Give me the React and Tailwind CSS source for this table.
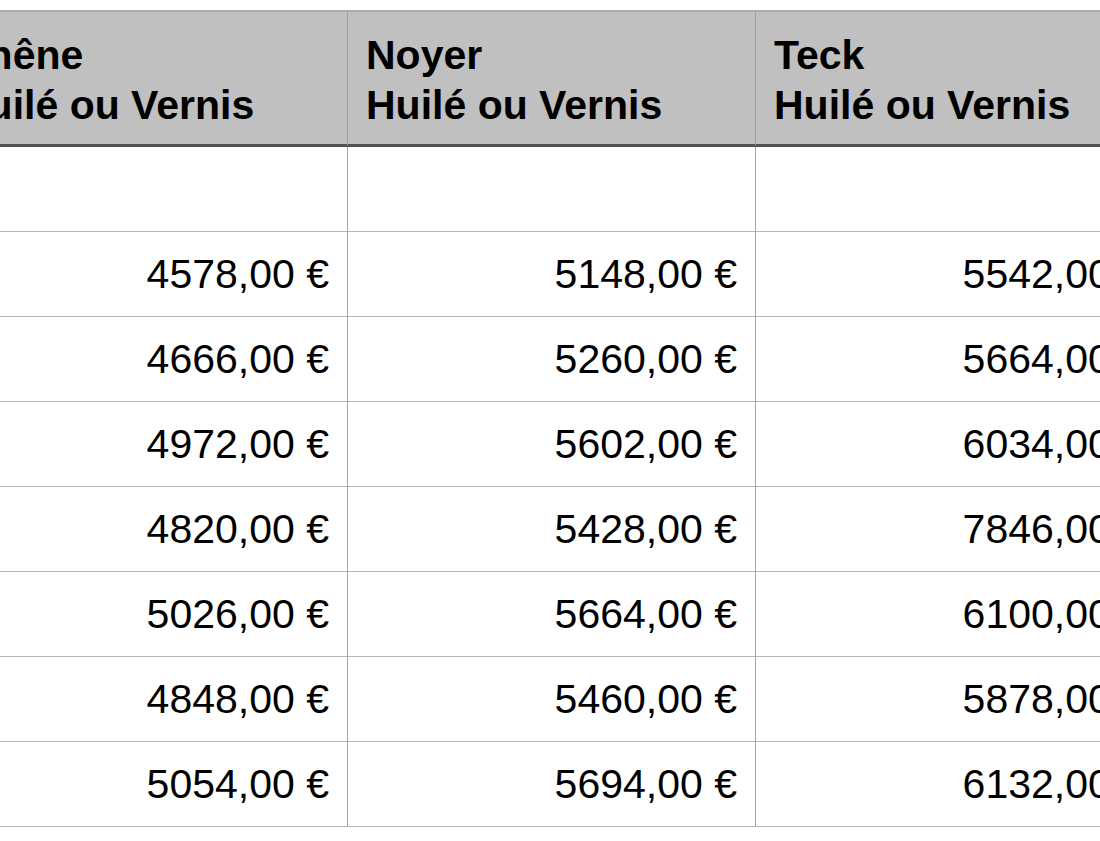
const HEADERS = ['Chêne', 'Noyer', 'Teck'];

const ROWS = [
  ['', '', ''],
  ['4578,00 €', '5148,00 €', '5542,00 €'],
  ['4666,00 €', '5260,00 €', '5664,00 €'],
  ['4972,00 €', '5602,00 €', '6034,00 €'],
  ['4820,00 €', '5428,00 €', '7846,00 €'],
  ['5026,00 €', '5664,00 €', '6100,00 €'],
  ['4848,00 €', '5460,00 €', '5878,00 €'],
  ['5054,00 €', '5694,00 €', '6132,00 €'],
];

export default function App() {
  return (
    <div
      className="w-[1100px] h-[841px] overflow-hidden bg-white pt-[10px] text-black"
      style={{ fontFamily: '"Liberation Sans", Arial, sans-serif' }}
    >
      <div className="ml-[-60px] w-[1224px] grid grid-cols-[408px_408px_408px]">
        {/* header */}
        {HEADERS.map((h) => (
          <div
            key={h}
            className="h-[137px] bg-[#c0c0c0] border-t-2 border-t-[#acacac] border-b-[3px] border-b-[#505050] border-r border-r-[#9e9e9e] pl-[18px] pt-[18px] text-[41px] font-bold leading-[50px]"
          >
            <div>{h}</div>
            <div>Huilé ou Vernis</div>
          </div>
        ))}

        {/* body */}
        {ROWS.map((row, r) =>
          row.map((v, c) => (
            <div
              key={`${r}-${c}`}
              className="h-[85px] border-b border-b-[#b4b4b4] border-r border-r-[#a4a4a4] flex items-center justify-end pr-[18px] text-[41px] leading-none"
            >
              {v}
            </div>
          ))
        )}
      </div>
    </div>
  );
}
